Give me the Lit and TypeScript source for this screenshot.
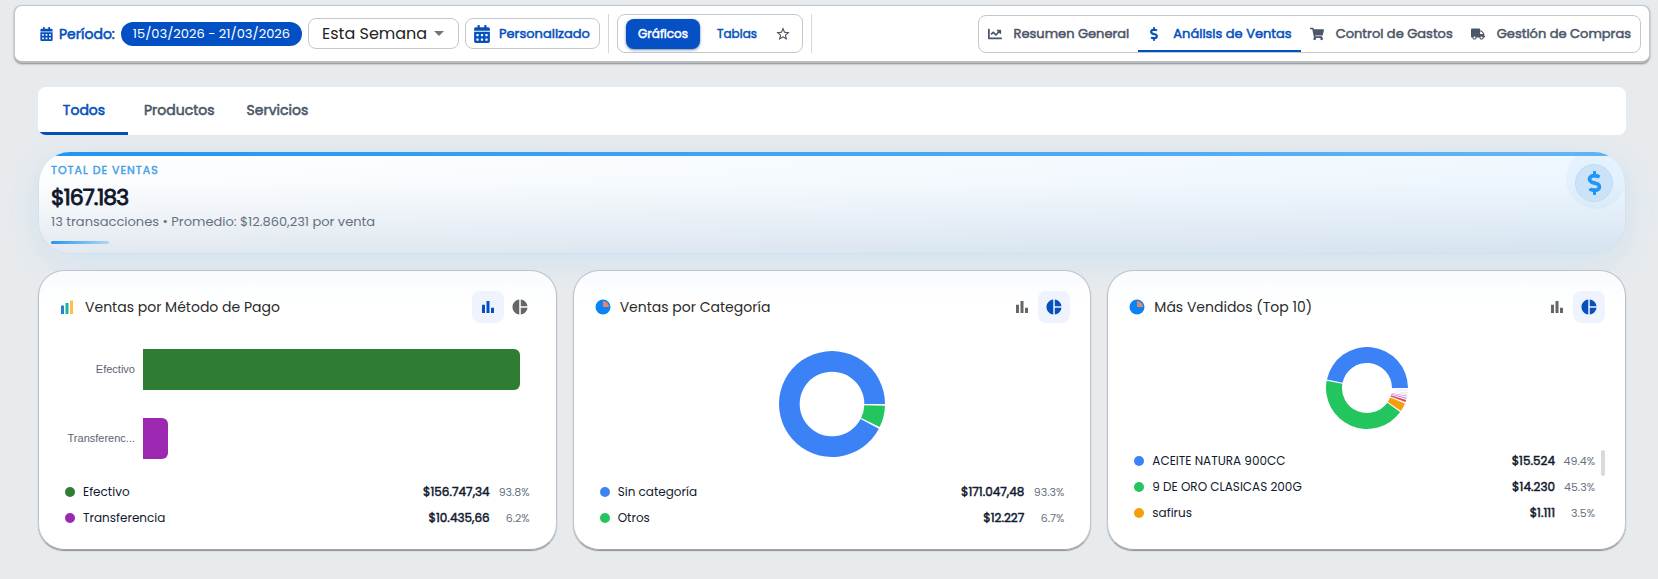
import { LitElement, html, css, svg, nothing } from "lit";
import { customElement, property } from "lit/decorators.js";
import { classMap } from "lit/directives/class-map.js";

const ICONS: Record<string, [string, string]> = {
  calendar: ["0 0 448 512", "M0 464c0 26.5 21.5 48 48 48h352c26.5 0 48-21.5 48-48V192H0v272zm320-196c0-6.6 5.4-12 12-12h40c6.6 0 12 5.4 12 12v40c0 6.6-5.4 12-12 12h-40c-6.6 0-12-5.4-12-12v-40zm0 128c0-6.6 5.4-12 12-12h40c6.6 0 12 5.4 12 12v40c0 6.6-5.4 12-12 12h-40c-6.6 0-12-5.4-12-12v-40zM192 268c0-6.6 5.4-12 12-12h40c6.6 0 12 5.4 12 12v40c0 6.6-5.4 12-12 12h-40c-6.6 0-12-5.4-12-12v-40zm0 128c0-6.6 5.4-12 12-12h40c6.6 0 12 5.4 12 12v40c0 6.6-5.4 12-12 12h-40c-6.6 0-12-5.4-12-12v-40zM64 268c0-6.6 5.4-12 12-12h40c6.6 0 12 5.4 12 12v40c0 6.6-5.4 12-12 12H76c-6.6 0-12-5.4-12-12v-40zm0 128c0-6.6 5.4-12 12-12h40c6.6 0 12 5.4 12 12v40c0 6.6-5.4 12-12 12H76c-6.6 0-12-5.4-12-12v-40zM400 64h-48V16c0-8.8-7.2-16-16-16h-32c-8.8 0-16 7.2-16 16v48H160V16c0-8.8-7.2-16-16-16h-32c-8.8 0-16 7.2-16 16v48H48C21.5 64 0 85.5 0 112v48h448v-48c0-26.5-21.5-48-48-48z"],
  line: ["0 0 512 512", "M496 384H64V80c0-8.84-7.16-16-16-16H16C7.16 64 0 71.16 0 80v336c0 17.67 14.33 32 32 32h464c8.84 0 16-7.16 16-16v-32c0-8.84-7.16-16-16-16zM464 96H345.94c-21.38 0-32.09 25.85-16.97 40.97l32.4 32.4L288 242.75l-73.37-73.37c-12.5-12.5-32.76-12.5-45.25 0l-68.69 68.69c-6.25 6.25-6.25 16.38 0 22.63l22.62 22.62c6.25 6.25 16.38 6.25 22.63 0L192 237.25l73.37 73.37c12.5 12.5 32.76 12.5 45.25 0l96-96 32.4 32.4c15.12 15.12 40.97 4.41 40.97-16.97V112c.01-8.84-7.15-16-15.99-16z"],
  dollar: ["0 0 288 512", "M209.2 233.4l-108-31.6C88.7 198.2 80 186.5 80 173.5c0-16.3 13.2-29.5 29.5-29.5h66.3c12.2 0 24.2 3.7 34.2 10.5 6.1 4.1 14.3 3.1 19.5-2l34.8-34c7.1-6.9 6.1-18.4-1.8-24.5C238 74.8 207.4 64.1 176 64V16c0-8.8-7.2-16-16-16h-32c-8.8 0-16 7.2-16 16v48h-2.5C45.8 64-5.4 118.7.5 183.6c4.2 46.1 39.4 83.6 83.8 96.6l102.5 30c12.5 3.7 21.2 15.3 21.2 28.3 0 16.3-13.2 29.5-29.5 29.5h-66.3C100 368 88 364.3 78 357.5c-6.1-4.1-14.3-3.1-19.5 2l-34.8 34c-7.1 6.9-6.1 18.4 1.8 24.5 24.5 19.2 55.1 29.9 86.5 30v48c0 8.8 7.2 16 16 16h32c8.8 0 16-7.2 16-16v-48.2c46.6-.9 90.3-28.6 105.7-72.7 21.5-61.6-14.6-124.8-72.5-141.7z"],
  cart: ["0 0 576 512", "M528.12 301.319l47.273-208C578.806 78.301 567.391 64 551.99 64H159.208l-9.166-44.81C147.758 8.021 137.93 0 126.529 0H24C10.745 0 0 10.745 0 24v16c0 13.255 10.745 24 24 24h69.883l70.248 343.435C147.325 417.1 136 435.222 136 456c0 30.928 25.072 56 56 56s56-25.072 56-56c0-15.674-6.447-29.835-16.824-40h209.647C430.447 426.165 424 440.326 424 456c0 30.928 25.072 56 56 56s56-25.072 56-56c0-22.172-12.888-41.332-31.579-50.405l5.517-24.276c3.413-15.018-8.002-29.319-23.403-29.319H218.117l-6.545-32h293.145c11.206 0 20.92-7.754 23.403-18.681z"],
  truck: ["0 0 640 512", "M624 352h-16V243.9c0-12.7-5.1-24.9-14.1-33.9L494 110.1c-9-9-21.2-14.1-33.9-14.1H416V48c0-26.5-21.5-48-48-48H48C21.5 0 0 21.5 0 48v320c0 26.5 21.5 48 48 48h16c0 53 43 96 96 96s96-43 96-96h128c0 53 43 96 96 96s96-43 96-96h48c8.8 0 16-7.2 16-16v-32c0-8.8-7.2-16-16-16zM160 464c-26.5 0-48-21.5-48-48s21.5-48 48-48 48 21.5 48 48-21.5 48-48 48zm320 0c-26.5 0-48-21.5-48-48s21.5-48 48-48 48 21.5 48 48-21.5 48-48 48zm80-208H416V144h44.1l99.9 99.9V256z"],
  star: ["0 0 24 24", "M22 9.24l-7.19-.62L12 2 9.19 8.63 2 9.24l5.46 4.73L5.82 21 12 17.27 18.18 21l-1.63-7.03L22 9.24zM12 15.4l-3.76 2.27 1-4.28-3.32-2.88 4.38-.38L12 6.1l1.71 4.04 4.38.38-3.32 2.88 1 4.28L12 15.4z"],
  caret: ["0 0 10 5", "M0 0h10L5 5z"],
  bars: ["0 0 24 24", "M4 9h4v11H4zm12 4h4v7h-4zm-6-9h4v16h-4z"],
  pie: ["0 0 24 24", "M11 2v20c-5.07-.5-9-4.79-9-10s3.93-9.5 9-10zm2.03 0v8.99H22c-.47-4.74-4.24-8.52-8.97-8.99zm0 11.01V22c4.74-.47 8.5-4.25 8.97-8.99h-8.97z"],
};

const icon = (name: string) => html`<svg class="icon" viewBox=${ICONS[name][0]} aria-hidden="true"><path d=${ICONS[name][1]}></path></svg>`;

interface Item { label: string; amount: string; pct: string; color: string; }
interface Slice { share: number; color: string; }

const shared = css`
  * { box-sizing: border-box; }
  button, select { font: inherit; color: inherit; background: none; border: 0; margin: 0; padding: 0; cursor: pointer; }
  .icon { display: block; flex: none; fill: currentColor; }
  .strong { font-weight: 400; -webkit-text-stroke: 0.04em currentColor; }
`;

@customElement("donut-chart")
class DonutChart extends LitElement {
  @property({ attribute: false }) slices: Slice[] = [];
  @property({ type: Number }) radius = 52;

  static styles = css`
    :host { display: block; }
    svg { display: block; }
  `;

  render() {
    const r = this.radius;
    const inner = r * 0.61;
    const gap = 2;
    const total = this.slices.reduce((sum, s) => sum + s.share, 0);
    const span = 360 - gap * this.slices.length;
    const point = (radius: number, deg: number) => {
      const a = (deg * Math.PI) / 180;
      return `${(radius * Math.cos(a)).toFixed(2)} ${(-radius * Math.sin(a)).toFixed(2)}`;
    };
    let at = 0;
    return html`<svg width=${r * 2} height=${r * 2} viewBox="${-r} ${-r} ${r * 2} ${r * 2}" role="img" aria-label="Gráfico circular">
      ${this.slices.map((s) => {
        const from = at;
        const to = at + (span * s.share) / total;
        at = to + gap;
        const large = to - from > 180 ? 1 : 0;
        return svg`<path fill=${s.color} d="M${point(r, from)}A${r} ${r} 0 ${large} 0 ${point(r, to)}L${point(inner, to)}A${inner} ${inner} 0 ${large} 1 ${point(inner, from)}Z"></path>`;
      })}
    </svg>`;
  }
}

@customElement("bar-chart")
class BarChart extends LitElement {
  @property({ attribute: false }) rows: { label: string; share: number; color: string }[] = [];

  static styles = css`
    :host { display: block; width: 100%; padding: 0 16px 0 8px; }
    .row { display: grid; grid-template-columns: 68px 1fr; column-gap: 8px; align-items: center; height: 41px; }
    .row + .row { margin-top: 28px; }
    .label { font: 11px/16px "Liberation Sans", Arial, sans-serif; color: #5b6474; text-align: right; white-space: nowrap; }
    .bar { height: 100%; border-radius: 0 6px 6px 0; }
  `;

  render() {
    return this.rows.map((r) => html`<div class="row">
      <span class="label">${r.label}</span>
      <div class="bar" style="width:${r.share}%;background:${r.color}"></div>
    </div>`);
  }
}

@customElement("chart-card")
class ChartCard extends LitElement {
  @property() heading = "";
  @property() mode: "bars" | "pie" = "pie";
  @property({ attribute: false }) items: Item[] = [];
  @property({ type: Boolean }) more = false;

  static styles = [shared, css`
    :host {
      display: flex; flex-direction: column; box-sizing: border-box; min-width: 0; min-height: 280px;
      padding: 20px; border: 1px solid #bfc3c9; border-bottom-color: #a2a5aa; border-radius: 26px;
      background: linear-gradient(#f7fbff, #ffffff 32px); box-shadow: 0 1px 1px #8e9196;
    }
    .head { display: flex; align-items: center; gap: 9px; height: 32px; padding-left: 1px; }
    .mark { width: 16px; height: 16px; flex: none; }
    h2 { flex: 1; margin: 0; font-size: 14px; line-height: 24px; font-weight: 400; color: #2b2b2b; white-space: nowrap; }
    .modes { display: flex; }
    .mode { display: grid; place-items: center; width: 32px; height: 32px; border-radius: 8px; color: #666; }
    .mode .icon { width: 18px; height: 18px; }
    .mode.on { color: #0550bc; background: #eef3fd; }
    .plot { flex: 1; display: flex; align-items: center; justify-content: center; padding-top: 3px; }
    .legend { display: flex; padding: 0 6px; }
    .legend.more { height: 79px; padding-right: 0; gap: 6px; }
    ul { flex: 1; list-style: none; margin: 0; padding: 0; display: flex; flex-direction: column; gap: 4px; }
    li { display: flex; align-items: center; gap: 8px; height: 22px; font-size: 12px; line-height: 18px; color: #111a2e; white-space: nowrap; }
    .dot { width: 10px; height: 10px; border-radius: 50%; flex: none; }
    .name { flex: 1; }
    .pct { width: 32px; text-align: right; font-size: 11px; color: #667080; }
    .thumb { width: 4px; height: 26px; border-radius: 2px; background: #d9dadc; }
  `];

  render() {
    const isBars = this.mode === "bars";
    return html`
      <div class="head">
        ${isBars
          ? html`<svg class="mark" viewBox="0 0 16 16" aria-hidden="true"><path fill="#2f7fd0" d="M1 6.5h3V15H1z"></path><path fill="#14b8a0" d="M5.5 4h3v11h-3z"></path><path fill="#fbbf4a" d="M10 1.500h3V15h-3z"></path></svg>`
          : html`<svg class="mark" viewBox="0 0 16 16" aria-hidden="true"><circle cx="8" cy="8" r="7.5" fill="#0a84f5"></circle><path fill="#e8875f" d="M8 8V2A6 6 0 0 1 14 8z"></path></svg>`}
        <h2>${this.heading}</h2>
        <div class="modes">
          <button class=${classMap({ mode: true, on: isBars })} aria-label="Barras">${icon("bars")}</button>
          <button class=${classMap({ mode: true, on: !isBars })} aria-label="Torta">${icon("pie")}</button>
        </div>
      </div>
      <div class="plot"><slot></slot></div>
      <div class=${classMap({ legend: true, more: this.more })}>
        <ul>
          ${this.items.map((i) => html`<li>
            <span class="dot" style="background:${i.color}"></span>
            <span class="name">${i.label}</span>
            <span class="strong">${i.amount}</span>
            <span class="pct">${i.pct}</span>
          </li>`)}
        </ul>
        ${this.more ? html`<div class="thumb"></div>` : nothing}
      </div>`;
  }
}

@customElement("app-root")
class AppRoot extends LitElement {
  static styles = [shared, css`
    :host {
      display: block; min-height: 100vh; box-sizing: border-box; padding: 5px 8px 28px 14px;
      background: #e7ebee; color: #1f2937; font-family: Poppins, Inter, "Open Sans", sans-serif;
    }
    .toolbar {
      display: flex; align-items: center; height: 58px; padding: 0 8px 0 25px;
      background: #fff; border: 1px solid #c3c7ca; border-bottom: 2px solid #b9bcbf; border-radius: 8px;
      box-shadow: 0 1px 2px #85888c; white-space: nowrap; font-size: 13px; line-height: 20px;
    }
    .period { display: flex; align-items: center; gap: 6px; color: #0550bc; font-size: 14px; }
    .period .icon { width: 13px; height: 14px; }
    .range { margin-left: 6px; padding: 2px 12px; border-radius: 12px; background: #0250c4; color: #fff; }
    .picker { display: grid; align-items: center; margin-left: 6px; width: 151px; height: 31px; border: 1px solid #c4c7cb; border-radius: 8px; }
    .picker select { grid-area: 1 / 1; appearance: none; width: 100%; height: 29px; padding-left: 13px; font-size: 16px; outline: 0; color: #222; }
    .picker .icon { grid-area: 1 / 1; justify-self: end; margin-right: 14px; width: 10px; height: 5px; color: #757575; pointer-events: none; }
    .custom { display: flex; align-items: center; gap: 9px; width: 135px; height: 31px; margin-left: 6px; padding-left: 8px; border: 1px solid #c4c7cb; border-radius: 8px; color: #0550bc; }
    .custom .icon { width: 16px; height: 18px; }
    .rule { width: 1px; height: 39px; margin: 0 8px; background: #d5d8db; }
    .views { display: flex; align-items: center; width: 186px; height: 39px; padding: 0 10px 0 8px; border: 1px solid #c4c7cb; border-radius: 8px; color: #0550bc; }
    .view { width: 74px; height: 30px; border-radius: 8px; font-size: 12px; }
    .view.on { background: #0550c4; color: #fff; box-shadow: 0 1px 3px #7688a8; }
    .fav { display: grid; place-items: center; flex: 1; color: #4a4a5e; }
    .fav .icon { width: 16px; height: 16px; }
    nav { display: flex; margin-left: auto; height: 38px; border: 1px solid #c4c7cb; border-radius: 8px; }
    nav a { display: flex; align-items: center; gap: 12px; padding: 0 9px; color: #4b5668; text-decoration: none; }
    nav a.on { color: #0550bc; box-shadow: inset 0 -2px #0550bc; }
    nav .icon { width: 14px; height: 14px; }
    main { padding: 24px 24px 0; }
    .tabs { display: flex; height: 48px; background: #fff; border-radius: 8px; padding-left: 2px; overflow: hidden; }
    .tab { padding: 0 16px 2px; font-size: 14px; color: #4b5668; }
    .tab.on { width: 88px; color: #0550bc; box-shadow: inset 0 -3px #0550b4; }
    .halo { margin: 17px 0 16px; border-radius: 32px; box-shadow: 0 8px 32px #2196f31a; }
    .total {
      position: relative; overflow: hidden; display: flex; justify-content: space-between; height: 102px; padding: 0 12px;
      border-radius: 32px; border: 1px solid #cfe2f2; border-top: 0;
      background: linear-gradient(90deg, #2196f300, #2196f312), linear-gradient(180deg, #ffffff, #fcfdfe 30%, #e3e9f0);
    }
    .total::before { content: ""; position: absolute; inset: 0 0 auto; height: 4px; background: linear-gradient(90deg, #2196f3, #64b5f6); }
    .kicker { margin-top: 11px; font-size: 11px; line-height: 14px; letter-spacing: 1px; color: #45a0e6; }
    .value { margin-top: 7px; font-size: 22px; line-height: 28px; color: #0f172a; letter-spacing: -1px; }
    .note { font-size: 13px; line-height: 20px; color: #64707f; }
    .spark { width: 58px; height: 3px; margin-top: 9px; border-radius: 2px; background: linear-gradient(90deg, #2196f3, #b3d5f2); }
    .glow { position: absolute; right: -1px; top: -3px; width: 60px; height: 60px; border-radius: 50%; background: #2196f30d; }
    .badge { display: grid; place-items: center; width: 38px; height: 38px; margin-top: 12px; border: 1px solid #bbdcf6; border-radius: 50%; background: #cbe3f8; color: #2196f3; z-index: 1; }
    .badge .icon { width: 15px; height: 24px; }
    .cards { display: grid; grid-template-columns: repeat(3, minmax(0, 1fr)); gap: 16px; }
  `];

  private readonly payments: Item[] = [
    { label: "Efectivo", amount: "$156.747,34", pct: "93.8%", color: "#2e7d32" },
    { label: "Transferencia", amount: "$10.435,66", pct: "6.2%", color: "#9c27b0" },
  ];
  private readonly categories: Item[] = [
    { label: "Sin categoría", amount: "$171.047,48", pct: "93.3%", color: "#3b82f6" },
    { label: "Otros", amount: "$12.227", pct: "6.7%", color: "#22c55e" },
  ];
  private readonly products: Item[] = [
    { label: "ACEITE NATURA 900CC", amount: "$15.524", pct: "49.4%", color: "#3b82f6" },
    { label: "9 DE ORO CLASICAS 200G", amount: "$14.230", pct: "45.3%", color: "#22c55e" },
    { label: "safirus", amount: "$1.111", pct: "3.5%", color: "#f59e0b" },
  ];
  private readonly productSlices: Slice[] = [
    { share: 49.4, color: "#3b82f6" }, { share: 45.3, color: "#22c55e" }, { share: 3.5, color: "#f59e0b" },
    { share: 0.9, color: "#ef4444" }, { share: 0.3, color: "#8b5cf6" }, { share: 0.2, color: "#ec4899" },
    { share: 0.1, color: "#8b5cf6" }, { share: 0.1, color: "#a8a29e" }, { share: 0.1, color: "#a5b4fc" }, { share: 0.1, color: "#f0abfc" },
  ];

  render() {
    return html`
      <header class="toolbar">
        <span class="period strong">${icon("calendar")}Período:</span>
        <span class="range">15/03/2026 - 21/03/2026</span>
        <div class="picker">
          <select aria-label="Período"><option>Esta Semana</option></select>
          ${icon("caret")}
        </div>
        <button class="custom strong">${icon("calendar")}Personalizado</button>
        <span class="rule"></span>
        <div class="views">
          <button class="view strong on">Gráficos</button>
          <button class="view strong">Tablas</button>
          <button class="fav" aria-label="Favorito">${icon("star")}</button>
        </div>
        <span class="rule"></span>
        <nav>
          <a href="#resumen" class="strong">${icon("line")}Resumen General</a>
          <a href="#ventas" class="strong on">${icon("dollar")}Análisis de Ventas</a>
          <a href="#gastos" class="strong">${icon("cart")}Control de Gastos</a>
          <a href="#compras" class="strong">${icon("truck")}Gestión de Compras</a>
        </nav>
      </header>
      <main>
        <div class="tabs" role="tablist">
          <button class="tab strong on" role="tab" aria-selected="true">Todos</button>
          <button class="tab strong" role="tab">Productos</button>
          <button class="tab strong" role="tab">Servicios</button>
        </div>
        <div class="halo">
          <section class="total">
            <div>
              <div class="kicker strong">TOTAL DE VENTAS</div>
              <div class="value strong">$167.183</div>
              <div class="note">13 transacciones • Promedio: $12.860,231 por venta</div>
              <div class="spark"></div>
            </div>
            <div class="glow"></div>
            <div class="badge">${icon("dollar")}</div>
          </section>
        </div>
        <section class="cards">
          <chart-card heading="Ventas por Método de Pago" mode="bars" .items=${this.payments}>
            <bar-chart .rows=${[
              { label: "Efectivo", share: 100, color: "#2e7d32" },
              { label: "Transferenc...", share: 6.66, color: "#9c27b0" },
            ]}></bar-chart>
          </chart-card>
          <chart-card heading="Ventas por Categoría" .items=${this.categories}>
            <donut-chart .radius=${53} .slices=${[{ share: 93.3, color: "#3b82f6" }, { share: 6.7, color: "#22c55e" }]}></donut-chart>
          </chart-card>
          <chart-card heading="Más Vendidos (Top 10)" .items=${this.products} more>
            <donut-chart .radius=${41} .slices=${this.productSlices}></donut-chart>
          </chart-card>
        </section>
      </main>`;
  }
}
